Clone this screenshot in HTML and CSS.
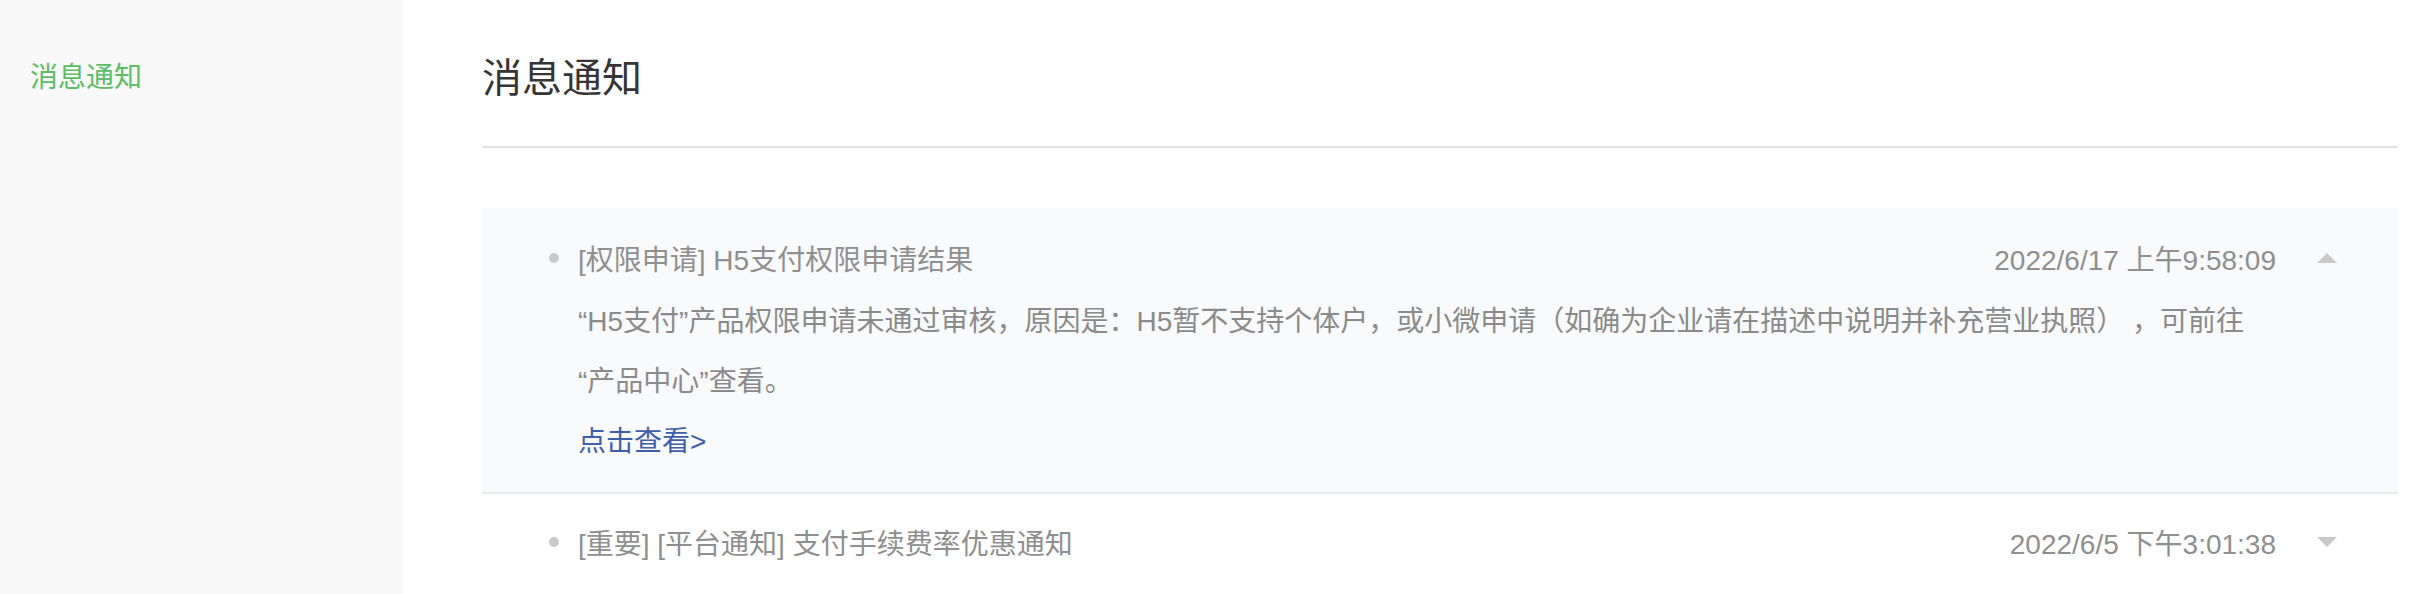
FILE: index.html
```html
<!DOCTYPE html>
<html lang="zh-CN">
<head>
<meta charset="utf-8">
<title>消息通知</title>
<link rel="stylesheet" href="styles.css">
</head>
<body>
<div class="layout">
  <aside class="sidebar">
    <a class="side-item active">消息通知</a>
  </aside>
  <main class="main">
    <h1 class="page-title">消息通知</h1>
    <ul class="notice-list">
      <li class="notice open">
        <div class="notice-head">
          <span class="dot"></span>
          <span class="notice-title">[权限申请] H5支付权限申请结果</span>
          <span class="notice-date">2022/6/17 上午9:58:09</span>
          <span class="caret up"></span>
        </div>
        <div class="notice-body">
          <p class="notice-text">“H5支付”产品权限申请未通过审核，原因是：H5暂不支持个体户，或小微申请（如确为企业请在描述中说明并补充营业执照）&nbsp;，可前往<br>“产品中心”查看。</p>
          <a class="notice-link">点击查看&gt;</a>
        </div>
      </li>
      <li class="notice">
        <div class="notice-head">
          <span class="dot"></span>
          <span class="notice-title">[重要] [平台通知] 支付手续费率优惠通知</span>
          <span class="notice-date">2022/6/5 下午3:01:38</span>
          <span class="caret down"></span>
        </div>
      </li>
    </ul>
  </main>
</div>
</body>
</html>
```
FILE: styles.css
```css
* { box-sizing: border-box; }
html, body { margin: 0; padding: 0; background: #fff; }
body {
  font-family: "Liberation Sans", "Noto Sans CJK SC", sans-serif;
  color: #353535;
}
.layout {
  display: flex;
  min-height: 100vh;
}
.sidebar {
  width: 402px;
  flex: 0 0 402px;
  background: #f9f9f9;
  padding: 58px 30px 0;
}
.side-item {
  display: block;
  font-size: 28px;
  line-height: 40px;
  color: #5cbd67;
  text-decoration: none;
}
.main {
  flex: 1;
  padding: 50px 24px 0 80px;
}
.page-title {
  margin: 0;
  font-size: 40px;
  line-height: 56px;
  font-weight: normal;
  color: #353535;
  padding-bottom: 40px;
  border-bottom: 2px solid #e1e1e1;
}
.notice-list {
  list-style: none;
  margin: 60px 0 0;
  padding: 0;
}
.notice {
  padding: 20px 0 20px;
  border-bottom: 2px solid #e9eaed;
}
.notice + .notice { padding-top: 18px; }
.notice.open { background: #f9fafc; }
.notice:last-child { border-bottom: none; }
.notice-head {
  display: flex;
  align-items: center;
  height: 60px;
  padding: 0 61px 0 67px;
  font-size: 28px;
  color: #8f8f8f;
}
.dot {
  width: 10px;
  height: 10px;
  border-radius: 50%;
  background: #c9c9c9;
  margin-right: 19px;
  flex: 0 0 auto;
}
.notice-title { flex: 1; white-space: nowrap; }
.notice-date {
  margin-right: 41px;
  white-space: nowrap;
  color: #8f8f8f;
}
.caret {
  width: 0;
  height: 0;
  border-left: 10px solid transparent;
  border-right: 10px solid transparent;
}
.caret.up { border-bottom: 10px solid #c9c9c9; }
.caret.down { border-top: 10px solid #c9c9c9; }
.notice-body {
  padding: 4px 121px 0 96px;
  font-size: 28px;
  line-height: 60px;
  color: #8a8a8a;
}
.notice-text { margin: 0; }
.notice-link {
  display: block;
  color: #3f5eaa;
  text-decoration: none;
}
```
